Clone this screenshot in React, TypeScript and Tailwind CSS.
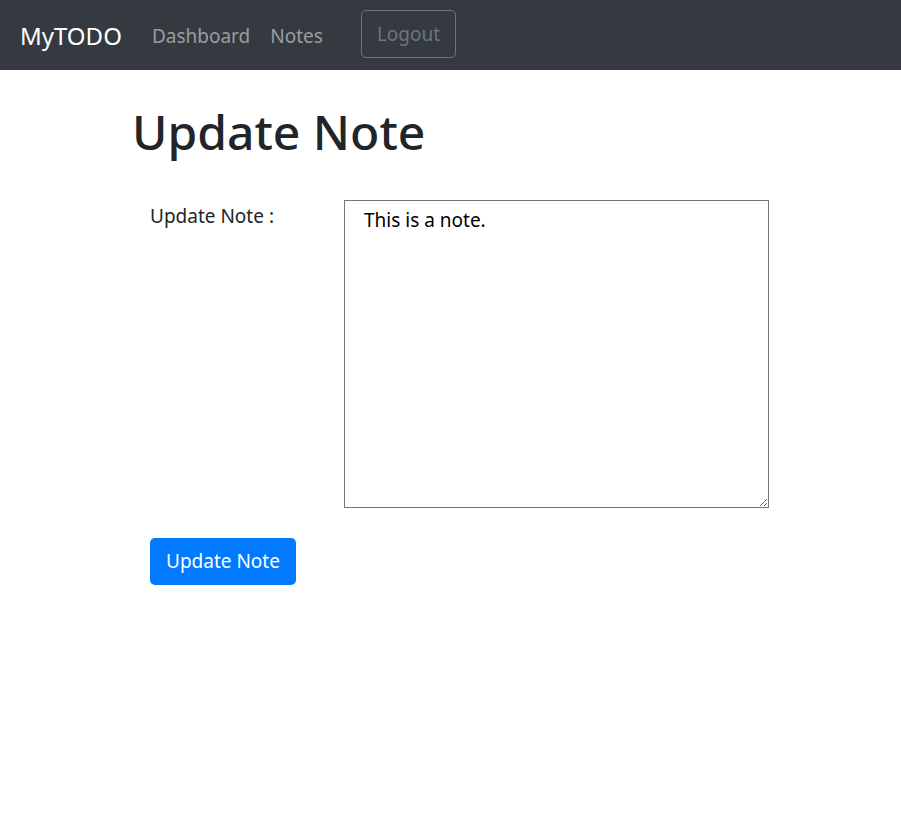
import React, { useState } from 'react';

const font = { fontFamily: '"Noto Sans", "Open Sans", Arial, sans-serif' };

const Navbar: React.FC = () => (
  <nav className="flex h-[70px] items-center bg-[#343a40] px-[20px]">
    <a href="#" className="mr-[20px] text-[24px] leading-[37px] text-white">
      MyTODO
    </a>
    <div className="flex items-center">
      <a href="#" className="px-[10px] pt-[1px] text-[19px] leading-[30px] text-[#ffffff80]">
        Dashboard
      </a>
      <a href="#" className="px-[10px] pt-[1px] text-[19px] leading-[30px] text-[#ffffff80]">
        Notes
      </a>
    </div>
    <button className="ml-[28px] mb-[2px] h-[48px] rounded-[5px] border border-[#6c757d] px-[15px] text-[19px] text-[#6c757d]">
      Logout
    </button>
  </nav>
);

export default function App() {
  const [note, setNote] = useState('This is a note.');

  return (
    <div className="min-h-[815px] bg-white" style={font}>
      <Navbar />
      <div className="mx-auto w-[675px] px-[19px]">
        <h1 className="mt-[32px] mb-[38px] text-[48px] font-medium leading-[60px] text-[#212529]">Update Note</h1>
        <form className="pl-[18px]" onSubmit={e => e.preventDefault()}>
          <div className="flex items-start">
            <label className="w-[194px] pt-[1px] text-[19px] leading-[30px] text-[#212529]">Update Note :</label>
            <textarea
              value={note}
              onChange={e => setNote(e.target.value)}
              className="h-[308px] w-[425px] border border-[#767676] px-[19px] py-[6px] text-[19px] leading-[26px] text-black outline-none"
            />
          </div>
          <button className="mt-[30px] h-[47px] rounded-[5px] bg-[#007bff] px-[16px] text-[19px] text-white">
            Update Note
          </button>
        </form>
      </div>
    </div>
  );
}
